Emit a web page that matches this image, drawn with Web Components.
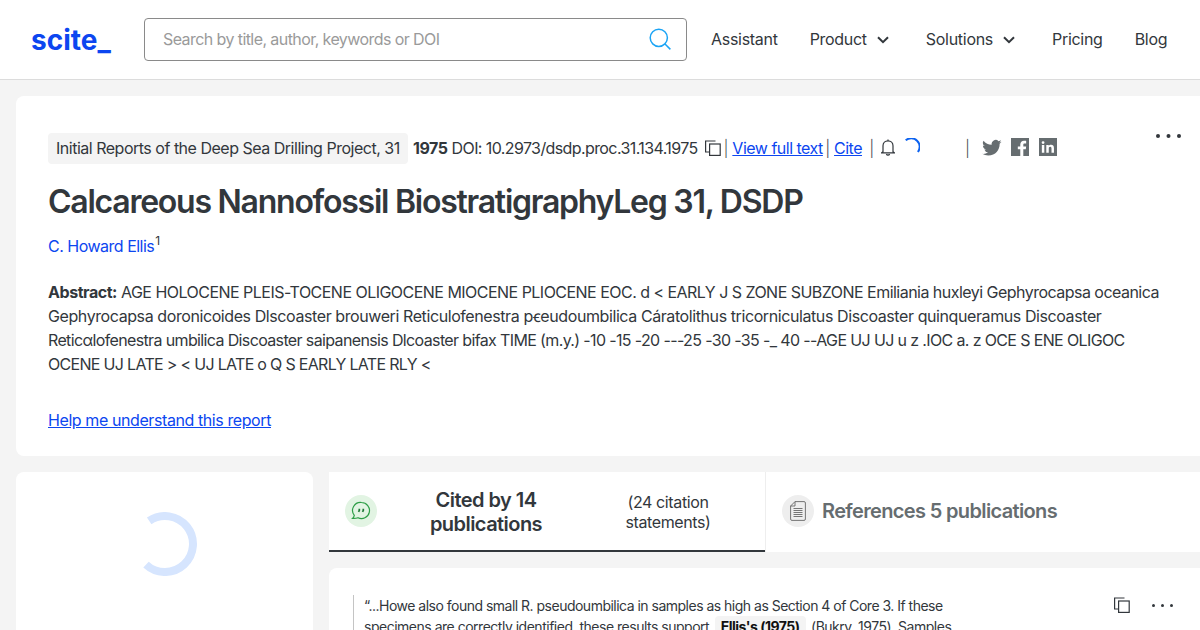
<!DOCTYPE html>
<html>
<head>
<meta charset="utf-8">
<title>scite</title>
<style>
html, body { margin: 0; height: 630px; overflow: hidden; }
body { background: #f4f4f4; font-family: Inter, "Liberation Sans", sans-serif; color: #32373c; font-size: 16px; letter-spacing: -.5px; }
</style>
</head>
<body>
<scite-header></scite-header>
<paper-card></paper-card>
<lower-section></lower-section>

<script>
const dots = (r, step) => `<svg width="${step * 2 + r * 2}" height="${r * 2}" viewBox="0 0 ${step * 2 + r * 2} ${r * 2}" fill="#32373c"><circle cx="${r}" cy="${r}" r="${r}"/><circle cx="${r + step}" cy="${r}" r="${r}"/><circle cx="${r + step * 2}" cy="${r}" r="${r}"/></svg>`;
const COPY = `<svg width="16" height="16" viewBox="0 0 16 16" fill="none" stroke="#32373c" stroke-width="1.2"><path d="M10.5 1H.6v11h3.400"/><rect x="4.600" y="4" width="10.600" height="11.400" fill="#fff"/></svg>`;
const CHEVRON = `<svg width="12" height="8" viewBox="0 0 12 8" fill="none" stroke="#32373c" stroke-width="2"><path d="M1 1.200l5 5 5-5"/></svg>`;

const templateHeader = document.createElement('template');
templateHeader.innerHTML = `
<style>
:host { display: flex; align-items: center; height: 79px; background: #fff; border-bottom: 1px solid #dcdcdc; padding: 0 32px; }
.logo { width: 112px; color: #0c46f0; font: 700 28px/1 Inter, sans-serif; letter-spacing: 0; flex: none; margin-left: -1px; margin-right: 1px; }
.search { flex: none; box-sizing: border-box; width: 543px; height: 43px; border: 1px solid #8a8a8a; border-radius: 4px; display: flex; align-items: center; justify-content: space-between; padding: 0 15px 2px 18px; color: #9a9a9a; letter-spacing: -.58px; }
nav { display: flex; align-items: center; margin-left: 24px; padding-bottom: 2px; gap: 32px; color: #32373c; letter-spacing: -.29px; }
nav span { display: flex; align-items: center; gap: 10px; }
nav svg { margin: 2px 5px 0 0; }
</style>
<div class="logo">scite_</div>
<div class="search">Search by title, author, keywords or DOI
  <svg width="22" height="22" viewBox="0 0 22 22" fill="none" stroke="#1ba4f5" stroke-width="1.5"><circle cx="9.800" cy="9.800" r="8.600"/><path d="M16 16l5.400 5.400"/></svg>
</div>
<nav>
  <span>Assistant</span>
  <span>Product ${CHEVRON}</span>
  <span>Solutions ${CHEVRON}</span>
  <span>Pricing</span>
  <span>Blog</span>
</nav>`;
class SciteHeader extends HTMLElement {
  constructor() {
    super();
    this.attachShadow({mode: 'open'}).appendChild(templateHeader.content.cloneNode(true));
  }
}
customElements.define('scite-header', SciteHeader);

const templateMeta = document.createElement('template');
templateMeta.innerHTML = `
<style>
:host { display: flex; align-items: center; height: 32px; white-space: nowrap; }
.chip { background: #f4f4f4; border-radius: 4px; padding: 0 8px; height: 31px; line-height: 31px; margin-right: 5.300px; letter-spacing: -.49px; }
b { font-weight: 700; margin-right: 4px; letter-spacing: -.45px; }
.doi { letter-spacing: -.6px; }
a { color: #0c46f0; text-decoration: underline; }
.sep { margin: 0 4.300px 0 2.400px; font-weight: 300; color: #4a4f53; }
svg { flex: none; }
.copy { margin-left: 7.500px; display: flex; }
.bell { margin: -2px 7px 0 3px; display: flex; }
.spin { margin-top: -3px; display: flex; }
.social { display: flex; gap: 9.200px; margin-left: 8.300px; }
</style>
<span class="chip">Initial Reports of the Deep Sea Drilling Project, 31</span>
<b>1975</b>
<span class="doi">DOI: 10.2973/dsdp.proc.31.134.1975</span>
<span class="copy">${COPY}</span>
<span class="sep">|</span><a href="#">View full text</a>
<span class="sep">|</span><a href="#">Cite</a>
<span class="sep" style="margin-left:7.300px">|</span>
<span class="bell"><svg width="14" height="17" viewBox="0 0 14 17" fill="none" stroke="#32373c" stroke-width="1.200"><path d="M2 12.600V6.800C2 3.800 4.200 1.800 7 1.800s5 2 5 5v5.800l1.400 1.200H.6z"/><path d="M7 .4v1.400M5.400 15a1.700 1.700 0 0 0 3.200 0"/></svg></span>
<span class="spin"><svg width="18" height="18" viewBox="0 0 18 18" fill="none" stroke="#0c62f0" stroke-width="2"><path d="M3.700 2.300A8.500 8.500 0 0 1 15.900 14"/></svg></span>
<span class="sep" style="margin-left:45px">|</span>
<span class="social">
  <svg width="20" height="20" viewBox="0 0 24 24" fill="#666d70"><path d="M23.500 4.600c-.86.38-1.790.64-2.750.76a4.800 4.800 0 0 0 2.100-2.650c-.93.55-1.950.95-3.040 1.170a4.780 4.780 0 0 0-8.150 4.360C7.700 8.060 4.180 6.160 1.820 3.260a4.780 4.780 0 0 0 1.480 6.380 4.760 4.760 0 0 1-2.170-.6v.06a4.780 4.780 0 0 0 3.840 4.690c-.7.19-1.440.22-2.160.08a4.790 4.790 0 0 0 4.470 3.320A9.600 9.600 0 0 1 .2 18.970 13.550 13.550 0 0 0 7.540 21.100c8.800 0 13.620-7.300 13.620-13.620l-.02-.62a9.700 9.700 0 0 0 2.360-2.260z"/></svg>
  <svg width="18" height="18" viewBox="0 0 19 19"><path fill="#666d70" d="M0 0h19v19h-6v-7h2.600l.4-3h-3V7.200c0-.9.3-1.400 1.500-1.400H16V3.100c-.3 0-1.200-.1-2.300-.1-2.300 0-3.900 1.400-3.900 4V9H7.200v3h2.600v7H0z"/></svg>
  <svg width="18" height="18" viewBox="0 0 19 19"><path fill="#666d70" fill-rule="evenodd" d="M0 0h19v19H0zM3 7.400v8.200h2.600V7.400zM4.300 3.300a1.500 1.500 0 1 0 0 3 1.500 1.500 0 0 0 0-3zM7.700 7.400v8.200h2.600v-4.300c0-1.200.4-2 1.500-2s1.400.9 1.400 2v4.300h2.600v-4.900c0-2.400-1.200-3.500-3-3.500-1.300 0-2.100.6-2.500 1.300V7.400z"/></svg>
</span>`;
class MetaRow extends HTMLElement {
  constructor() {
    super();
    this.attachShadow({mode: 'open'}).appendChild(templateMeta.content.cloneNode(true));
  }
}
customElements.define('meta-row', MetaRow);

const templatePaper = document.createElement('template');
templatePaper.innerHTML = `
<style>
:host { display: block; position: relative; box-sizing: border-box; height: 360px; margin: 16px 0 16px 16px; padding: 36px 32px 0; background: #fff; border-radius: 8px 0 0 8px; }
h1 { margin: 18px 0 0; font: 600 32px/40px Inter, sans-serif; letter-spacing: -1.25px; color: #32373c; }
.author { margin-top: 12px; line-height: 24px; }
.author a { color: #0c46f0; text-decoration: none; }
sup { font-size: 12px; line-height: 0; margin-left: 1px; position: relative; top: -1px; }
.abstract { margin: 22px 0 0; line-height: 24px; white-space: nowrap; }
.abstract span { display: block; }
.abstract b { letter-spacing: -.45px; }
.help { display: block; margin-top: 32px; line-height: 24px; color: #0c46f0; letter-spacing: -.41px; }
.more { position: absolute; top: 38px; right: 19px; display: flex; }
</style>
<meta-row></meta-row>
<h1>Calcareous Nannofossil BiostratigraphyLeg 31, DSDP</h1>
<div class="author"><a href="#">C. Howard Ellis</a><sup>1</sup></div>
<p class="abstract"><span style="letter-spacing:-.527px"><b>Abstract:</b> AGE HOLOCENE PLEIS-TOCENE OLIGOCENE MIOCENE PLIOCENE EOC. d &lt; EARLY J S ZONE SUBZONE Emiliania huxleyi Gephyrocapsa oceanica</span><span style="letter-spacing:-.41px">Gephyrocapsa doronicoides Dlscoaster brouweri Reticulofenestra pꞓeudoumbilica Cáratolithus tricorniculatus Discoaster quinqueramus Discoaster</span><span style="letter-spacing:-.634px">Reticαlofenestra umbilica Discoaster saipanensis Dlcoaster bifax TIME (m.y.) -10 -15 -20 ---25 -30 -35 -_ 40 --AGE UJ UJ u z .IOC a. z OCE S ENE OLIGOC</span><span style="letter-spacing:-.69px">OCENE UJ LATE &gt; &lt; UJ LATE o Q S EARLY LATE RLY &lt;</span></p>
<a class="help" href="#">Help me understand this report</a>
<span class="more">${dots(2, 10.5)}</span>`;
class PaperCard extends HTMLElement {
  constructor() {
    super();
    this.attachShadow({mode: 'open'}).appendChild(templatePaper.content.cloneNode(true));
  }
}
customElements.define('paper-card', PaperCard);

const templateTab = document.createElement('template');
templateTab.innerHTML = `
<style>
:host { display: flex; align-items: center; box-sizing: border-box; height: 80px; padding: 0 0 2px 16px; background: #fff; }
:host([active]) { padding-bottom: 0; border-bottom: 2px solid #32373c; }
.ico { flex: none; width: 32px; height: 32px; border-radius: 50%; display: flex; align-items: center; justify-content: center; }
</style>
<span class="ico"><slot name="icon"></slot></span>
<slot></slot>`;
class CitationTab extends HTMLElement {
  constructor() {
    super();
    this.attachShadow({mode: 'open'}).appendChild(templateTab.content.cloneNode(true));
    this.shadowRoot.querySelector('.ico').style.background = this.getAttribute('tint') || '#eee';
  }
}
customElements.define('citation-tab', CitationTab);

const templateLower = document.createElement('template');
templateLower.innerHTML = `
<style>
:host { display: grid; grid-template-columns: 297px 1fr; gap: 16px; margin-left: 16px; }
.side { background: #fff; border-radius: 8px 8px 0 0; height: 300px; display: flex; justify-content: center; padding: 40px 0 0 1px; box-sizing: border-box; }
.tabs { display: grid; grid-template-columns: 436px 1fr; gap: 1px; background: #eee; }
.t1 { flex: none; width: 168px; margin: 2px 0 0 25px; text-align: center; font: 600 20px/24px Inter, sans-serif; letter-spacing: -.55px; color: #32373c; }
.t2 { flex: none; width: 130px; margin: 2px 0 0 33px; text-align: center; line-height: 20px; letter-spacing: -.38px; }
.t3 { margin-left: 8px; font: 600 20px/24px Inter, sans-serif; letter-spacing: -.645px; color: #666d70; }
.quote { margin-top: 16px; background: #fff; border-radius: 8px 0 0 0; height: 200px; padding: 27px 16px 0 24px; box-sizing: border-box; display: flex; justify-content: space-between; }
.text { border-left: 1px solid #c4c4c4; padding-left: 10px; width: 620px; font-size: 14px; line-height: 21px; white-space: nowrap; letter-spacing: -.51px; }
.text span { letter-spacing: -.49px; }
mark { background: #f4f4f4; color: #111; font-weight: 700; padding: 2px 6px; border-radius: 4px; margin: 0 2px; }
.acts { display: flex; gap: 22px; margin: 2px 11px 0 0; }
.acts span { display: flex; margin-top: 7px; }
</style>
<div class="side">
  <svg width="64" height="64" viewBox="0 0 64 64" fill="none" stroke="#d6e5fe" stroke-width="8"><path d="M16.200 8.900A28 28 0 1 1 13 52.600"/></svg>
</div>
<div>
  <div class="tabs">
    <citation-tab active tint="#e2f4e3">
      <svg slot="icon" width="20" height="20" viewBox="0 0 20 20" fill="none" stroke="#2e9e47" stroke-width="1.200"><path d="M10.500 1.500a8 8 0 1 1-3.500 15.200c-1.700.7-3.500.9-5.500.7 1-.8 1.600-1.800 1.800-3A8 8 0 0 1 10.500 1.500z"/><path stroke-width="1.700" stroke="#1f7a38" d="M8.300 7.800v1.600l-.8 1.400M12.300 7.800v1.600l-.8 1.400"/></svg>
      <span class="t1">Cited by 14 publications</span>
      <span class="t2">(24 citation statements)</span>
    </citation-tab>
    <citation-tab tint="#eeeeee">
      <svg slot="icon" width="16" height="20" viewBox="0 0 16 20" fill="none" stroke="#666" stroke-width=".9"><path d="M5 .6h9a1.400 1.400 0 0 1 1.400 1.400v16a1.400 1.400 0 0 1-1.400 1.400H2A1.400 1.400 0 0 1 .6 18V5zM5 .6V5H.6"/><path d="M3.500 7.500h9M3.500 9.500h9M3.500 11.500h9M3.500 13.500h9M3.500 15.500h9"/></svg>
      <span class="t3">References 5 publications</span>
    </citation-tab>
  </div>
  <div class="quote">
    <div class="text">“...Howe also found small R. pseudoumbilica in samples as high as Section 4 of Core 3. If these<br><span>specimens are correctly identified, these results support <mark>Ellis's (1975)</mark> (Bukry, 1975). Samples</span></div>
    <div class="acts">${COPY}<span>${dots(1.5, 9)}</span></div>
  </div>
</div>`;
class LowerSection extends HTMLElement {
  constructor() {
    super();
    this.attachShadow({mode: 'open'}).appendChild(templateLower.content.cloneNode(true));
  }
}
customElements.define('lower-section', LowerSection);
</script>
</body>
</html>
